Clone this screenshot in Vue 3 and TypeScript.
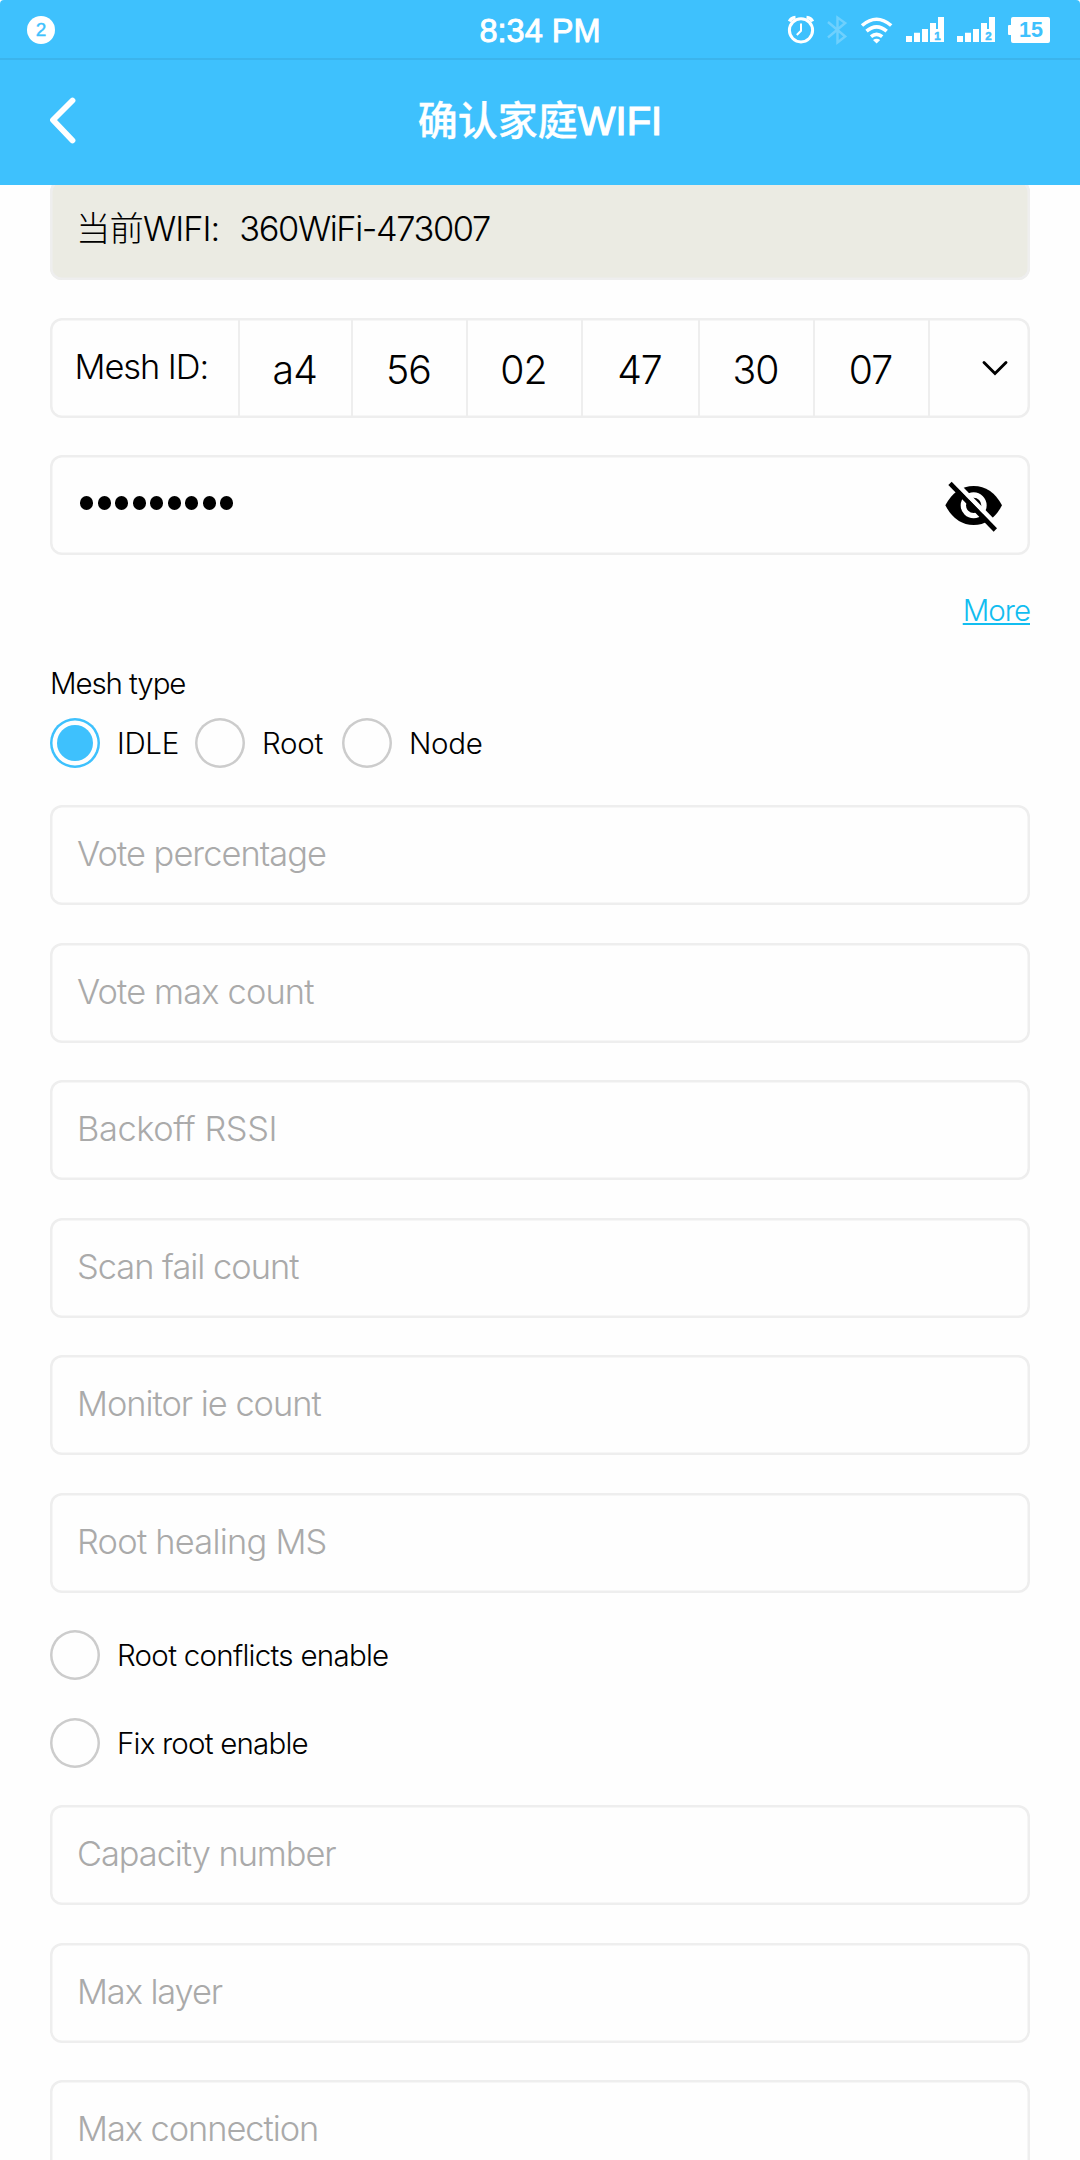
<script setup lang="ts">
import { ref } from 'vue'

interface Option { label: string; width: number }
interface Part { value: string; width: number }
interface Field { label: string; spacing: number }

const meshId: Part[] = [
  { value: 'a4', width: 112.5 },
  { value: '56', width: 115 },
  { value: '02', width: 115 },
  { value: '47', width: 117 },
  { value: '30', width: 115 },
  { value: '07', width: 115 },
]
const meshTypes: Option[] = [
  { label: 'IDLE', width: 145 },
  { label: 'Root', width: 147 },
  { label: 'Node', width: 150 },
]
const selected = ref('IDLE')
const fields: Field[] = [
  { label: 'Vote percentage', spacing: -0.95 },
  { label: 'Vote max count', spacing: -0.85 },
  { label: 'Backoff RSSI', spacing: -0.4 },
  { label: 'Scan fail count', spacing: -1 },
  { label: 'Monitor ie count', spacing: -1.02 },
  { label: 'Root healing MS', spacing: -0.75 },
]
const switches: Field[] = [
  { label: 'Root conflicts enable', spacing: -0.72 },
  { label: 'Fix root enable', spacing: -0.8 },
]
const limits: Field[] = [
  { label: 'Capacity number', spacing: -1.05 },
  { label: 'Max layer', spacing: -1.1 },
  { label: 'Max connection', spacing: -1.05 },
]
</script>

<template>
  <div class="screen">
    <header class="top">
      <div class="status">
        <div class="side"><span class="badge">2</span></div>
        <div class="time">8:34 PM</div>
        <div class="side right">
          <svg class="icons" width="310" height="58" viewBox="0 0 310 58">
            <g fill="none" stroke="#fff">
              <circle cx="31" cy="30.3" r="11.6" stroke-width="3" />
              <path d="M31 23.500V30.800L26.800 35" stroke-width="2" />
              <path d="M19.500 21.500Q21 17.800 25.500 17.500M42.500 21.500Q41 17.800 36.500 17.500" stroke-width="3.400" />
              <path d="M58 22L75.200 36.500L67.500 42.500V17.500L75.200 23L58 37.500" stroke-width="2.400" opacity=".25" />
              <path d="M92 25.500Q106.600 13 121.200 25.500" stroke-width="3.600" />
              <path d="M96.500 31.200Q106.600 22.500 116.700 31.200" stroke-width="3.600" />
              <path d="M101 36.600Q106.600 32 112.200 36.600" stroke-width="3.600" />
            </g>
            <g fill="#fff">
              <path d="M103 40Q106.600 37.500 110.200 40L106.600 43.500Z" />
              <path d="M136 36h6v6h-6zM144 32.700h6V42h-6zM152 29h6v13h-6zM160 23h6v6h2V17h6v25h-14z" />
              <path d="M187 36h6v6h-6zM195 32.700h6V42h-6zM203 29h6v13h-6zM211 23h6v6h2V17h6v25h-14z" />
              <path d="M243 17h35a2 2 0 0 1 2 2v22a2 2 0 0 1-2 2h-35a2 2 0 0 1-2-2v-6h-2a1 1 0 0 1-1-1v-8a1 1 0 0 1 1-1h2v-6a2 2 0 0 1 2-2z" />
            </g>
            <g fill="#3ec1fd" font-family="Liberation Sans, sans-serif" font-weight="700" text-anchor="middle">
              <text x="167.500" y="40" font-size="11.500" stroke="#3ec1fd" stroke-width=".5">1</text>
              <text x="218.500" y="40" font-size="11.500" stroke="#3ec1fd" stroke-width=".5">2</text>
              <text x="261" y="37" font-size="21.500">15</text>
            </g>
          </svg>
        </div>
      </div>
      <div class="nav">
        <div class="lead">
          <svg class="back" width="32" height="54" viewBox="0 0 32 54"><path d="M25.500 7.500L6 27L25.500 47.500" fill="none" stroke="#fff" stroke-width="5.800" stroke-linecap="round" stroke-linejoin="round" /></svg>
        </div>
        <h1>确认家庭<span>WIFI</span></h1>
        <div class="lead"></div>
      </div>
    </header>

    <main class="form">
      <div class="box current"><span>当前WIFI:</span><span class="ssid">360WiFi-473007</span></div>

      <div class="box mesh">
        <div class="name">Mesh ID:</div>
        <div v-for="part in meshId" :key="part.value" class="cell" :style="{ width: part.width + 'px' }">{{ part.value }}</div>
        <div class="drop">
          <svg width="30" height="20" viewBox="0 0 30 20"><path d="M4 4.500L15 15.500L26 4.500" fill="none" stroke="#000" stroke-width="2.900" stroke-linecap="round" /></svg>
        </div>
      </div>

      <div class="box password">
        <div class="dots"><i v-for="n in 9" :key="n"></i></div>
        <svg class="eye" width="60" height="52" viewBox="0 0 180 156">
          <path d="M7 76Q38 18 92 18T177 76Q146 135 92 135T7 76Z" />
          <circle cx="92" cy="76" r="31" fill="none" stroke="#fff" stroke-width="16" />
          <path d="M30 0L168 142" stroke="#fff" stroke-width="14" />
          <path d="M21 10L157 150" stroke="#000" stroke-width="14" />
        </svg>
      </div>

      <a class="more">More</a>
      <div class="caption">Mesh type</div>
      <div class="radios">
        <div v-for="t in meshTypes" :key="t.label" class="radio" :style="{ width: t.width + 'px' }" @click="selected = t.label">
          <span class="ring" :class="{ on: selected === t.label }"></span>
          <span class="label">{{ t.label }}</span>
        </div>
      </div>

      <div v-for="f in fields" :key="f.label" class="box field">
        <span :style="{ letterSpacing: f.spacing + 'px' }">{{ f.label }}</span>
      </div>
      <div v-for="s in switches" :key="s.label" class="radio">
        <span class="ring"></span><span class="label" :style="{ letterSpacing: s.spacing + 'px' }">{{ s.label }}</span>
      </div>
      <div v-for="f in limits" :key="f.label" class="box field">
        <span :style="{ letterSpacing: f.spacing + 'px' }">{{ f.label }}</span>
      </div>
    </main>
  </div>
</template>

<style>
body { margin: 0; background: #fff; overflow: hidden; }
</style>

<style scoped>
.screen {
  width: 1080px;
  height: 2160px;
  overflow: hidden;
  display: flex;
  flex-direction: column;
  background: #fefefe;
  color: #000;
  font-family: Inter, "Noto Sans CJK SC", sans-serif;
  font-weight: 300;
}
.top {
  position: relative;
  z-index: 1;
  flex: none;
  height: 185px;
  background: #3ec1fd;
  color: #fff;
  border-radius: 4px 4px 0 0;
  font-family: "Liberation Sans", "Noto Sans CJK SC", sans-serif;
}
.status {
  height: 58px;
  display: flex;
  align-items: center;
  border-bottom: 2px solid #3bb4ec;
}
.side { flex: 1 1 0; display: flex; height: 58px; align-items: center; }
.side.right { justify-content: flex-end; }
.badge {
  width: 28px;
  height: 28px;
  margin: 2px 0 0 27px;
  border-radius: 50%;
  background: #fff;
  color: #3ec1fd;
  font-size: 19px;
  font-weight: 400;
  line-height: 28px;
  text-align: center;
  -webkit-text-stroke: 0.4px #3ec1fd;
}
.time { font-size: 32.500px; font-weight: 400; line-height: 58px; padding-top: 3px; -webkit-text-stroke: 0.9px #fff; }
.icons { display: block; }
.nav { height: 125px; display: flex; align-items: center; }
.lead { flex: 1 1 0; box-sizing: border-box; padding-left: 46.500px; }
.back { display: block; margin-bottom: 5px; }
h1 {
  margin: 0 0 3px;
  flex: none;
  font-size: 40px;
  font-weight: 500;
  line-height: 60px;
  -webkit-text-stroke: 0.300px #fff;
}
h1 span { -webkit-text-stroke: 1.200px #fff; }
.form {
  flex: none;
  margin-top: -4.700px;
  padding: 0 50px;
  display: flex;
  flex-direction: column;
  gap: 37.500px;
}
.box {
  height: 100px;
  flex: none;
  box-sizing: border-box;
  display: flex;
  border-radius: 12px;
  box-shadow: inset 0 0 0 2.500px #eee;
  font-size: 34.400px;
  line-height: 97px;
  letter-spacing: -0.95px;
}
.current { background: #ebebe3; padding-left: 26px; gap: 20px; }
.ssid { letter-spacing: -1.400px; }
.name { width: 190px; flex: none; box-sizing: border-box; padding-left: 24.500px; border-right: 2.500px solid #eee; letter-spacing: -1.050px; }
.cell {
  flex: none;
  box-sizing: border-box;
  border-right: 2.500px solid #eee;
  text-align: center;
  font-size: 39.200px;
  line-height: 103px;
  padding-right: 1px;
}
.drop { flex: 1; display: flex; align-items: center; justify-content: flex-end; padding-right: 20px; }
.password { align-items: center; padding: 0 27px 0 30px; justify-content: space-between; }
.dots { display: flex; gap: 4.500px; padding-bottom: 5px; }
.dots i { width: 13px; height: 13.500px; border-radius: 50%; background: #000; }
.eye { display: block; margin-top: 2px; }
.more {
  align-self: flex-end;
  height: 35px;
  line-height: 35px;
  font-size: 29.500px;
  letter-spacing: -1px;
  color: #12bdf0;
  text-decoration: underline;
  text-decoration-thickness: 1.500px;
  text-underline-offset: 1.500px;
}
.caption { font-size: 29.500px; line-height: 36px; letter-spacing: -1.100px; }
.radios { display: flex; margin-top: -21.100px; }
.radio { display: flex; align-items: center; height: 50px; flex: none; }
.ring {
  width: 50px;
  height: 50px;
  flex: none;
  box-sizing: border-box;
  box-shadow: inset 0 0 0 2.500px #ccc;
  border-radius: 50%;
  display: flex;
  align-items: center;
  justify-content: center;
}
.ring.on { box-shadow: inset 0 0 0 2.500px #3ec1fd; }
.ring.on::after { content: ""; width: 36px; height: 36px; border-radius: 50%; background: #3ec1fd; }
.label { margin-left: 17px; font-size: 29.500px; line-height: 50px; letter-spacing: -0.3px; white-space: nowrap; }
.field { color: #aaa; padding-left: 27px; }
</style>
